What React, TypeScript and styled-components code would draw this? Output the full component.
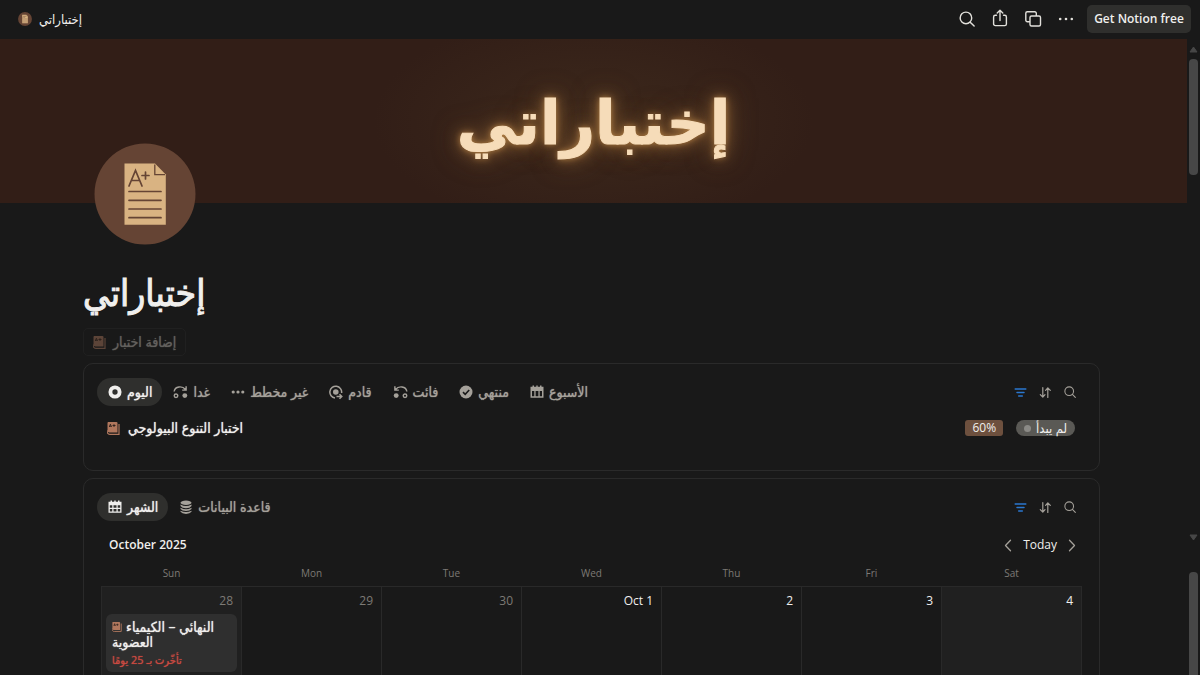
import React from "react";
import styled, { createGlobalStyle } from "styled-components";

const sans = `"Open Sans", "DejaVu Sans Condensed", "DejaVu Sans", sans-serif`;

const Global = createGlobalStyle`
  * { box-sizing: border-box; }
  html, body, #root { height: 100%; }
  body {
    margin: 0;
    overflow: hidden;
    background: #191919;
    color: #f0efed;
    font-family: ${sans};
    font-size: 12px;
    line-height: 16px;
  }
  button { font: inherit; color: inherit; border: 0; background: none; padding: 0; cursor: pointer; }
  a { color: inherit; text-decoration: none; }
  h1, h2, p { margin: 0; padding: 0; }
  svg { display: block; flex: none; }
`;

const Shell = styled.div`
  display: flex;
  flex-direction: column;
  height: 100vh;
`;

const TopBar = styled.header`
  display: flex;
  align-items: center;
  justify-content: space-between;
  flex: none;
  height: 39px;
  padding: 0 9px 1px 18px;
`;

const Crumb = styled.a`
  display: flex;
  align-items: center;
  gap: 7px;
  font-size: 13px;
`;

const Actions = styled.div`
  display: flex;
  align-items: center;
  gap: 11px;
`;

const IconGroup = styled.div`
  display: flex;
  gap: 13px;
`;

const IconButton = styled.button`
  display: flex;
  align-items: center;
  justify-content: center;
  width: 20px;
  height: 20px;
  color: #e2e0db;
`;

const CtaButton = styled.button`
  height: 28px;
  width: 104px;
  border-radius: 5px;
  background: #2f2f2d;
  font-weight: 600;
  white-space: nowrap;
`;

const Body = styled.div`
  display: flex;
  flex: 1;
  min-height: 0;
`;

const Page = styled.main`
  flex: 1;
  min-width: 0;
  overflow: hidden;
`;

const Cover = styled.div`
  display: flex;
  align-items: center;
  justify-content: center;
  height: 164px;
  padding-top: 4px;
  background: radial-gradient(ellipse 220px 110px at center, #3d291c, #321e17);
`;

const CoverText = styled.span`
  color: #f6dcb9;
  font-family: "DejaVu Sans", sans-serif;
  font-size: 60px;
  font-weight: 700;
  line-height: 80px;
  -webkit-text-stroke: 1px #f6dcb9;
  text-shadow: 0 0 6px #b88446, 0 0 16px #94683a, 0 0 28px #6b4828;
`;

const Sheet = styled.div`
  display: flex;
  flex-direction: column;
  align-items: flex-start;
  padding: 0 87px 0 83px;
`;

const PageIcon = styled.div`
  position: relative;
  margin: -60px 0 0 11px;
`;

const Title = styled.h1`
  margin-top: 23px;
  font-size: 37px;
  line-height: 48px;
  font-weight: 400;
  -webkit-text-stroke: 1px currentColor;
`;

const Medium = styled.bdi`
  font-size: 14px;
  font-weight: 400;
  text-shadow: 0 0 1px currentColor;
`;

const AddButton = styled.button`
  display: flex;
  align-items: center;
  gap: 7px;
  height: 28px;
  margin-top: 12px;
  padding: 0 9px;
  border: 1px solid #202020;
  border-radius: 5px;
  color: #62605d;
`;

const Card = styled.section<{ $height: number }>`
  align-self: stretch;
  min-height: ${(p) => p.$height}px;
  margin-top: 7px;
  padding: 14px 17px 0 13px;
  border: 1px solid #2a2a2a;
  border-radius: 10px;
`;

const CardBar = styled.div`
  display: flex;
  align-items: center;
  justify-content: space-between;
`;

const Tabs = styled.nav`
  display: flex;
`;

const Tab = styled.button<{ $active?: boolean }>`
  display: flex;
  align-items: center;
  gap: 5px;
  height: 28px;
  padding: 0 10px 0 11px;
  border-radius: 14px;
  background: ${(p) => (p.$active ? "#2f2f2d" : "transparent")};
  color: ${(p) => (p.$active ? "#f0efed" : "#a5a19a")};
  white-space: nowrap;
`;

const Tools = styled.div`
  display: flex;
  gap: 5px;
  padding-right: 2px;
`;

const ToolButton = styled(IconButton)<{ $on?: boolean }>`
  color: ${(p) => (p.$on ? "#2a77cf" : "#a5a19a")};
`;

const Row = styled.div`
  display: flex;
  align-items: center;
  justify-content: space-between;
  height: 28px;
  margin-top: 8px;
  padding: 0 7px 0 10px;
`;

const RowTitle = styled.a`
  display: flex;
  align-items: center;
  gap: 8px;
`;

const Badges = styled.div`
  display: flex;
  gap: 13px;
`;

const Percent = styled.span`
  height: 16px;
  padding: 0 7px;
  border-radius: 3px;
  background: #6d503e;
`;

const Status = styled.span`
  display: flex;
  align-items: center;
  gap: 5px;
  height: 16px;
  padding: 0 8px;
  border-radius: 8px;
  background: #5a5955;
  font-size: 13px;
`;

const Dot = styled.i`
  width: 7px;
  height: 7px;
  border-radius: 50%;
  background: #8b8a86;
`;

const MonthBar = styled.div`
  display: flex;
  align-items: center;
  justify-content: space-between;
  height: 24px;
  margin-top: 12px;
  padding-left: 12px;
`;

const Month = styled.h2`
  font-size: 12px;
  line-height: 16px;
  font-weight: 600;
`;

const Pager = styled.div`
  display: flex;
  align-items: center;
  gap: 5px;
  font-weight: 500;
`;

const Calendar = styled.table`
  width: calc(100% - 4px);
  margin: 6px 0 0 4px;
  border-collapse: collapse;
  table-layout: fixed;
`;

const DayName = styled.th`
  height: 23px;
  padding: 0;
  vertical-align: top;
  color: #7d7a75;
  font-size: 10px;
  line-height: 20px;
  font-weight: 400;
`;

const Day = styled.td<{ $weekend: boolean; $muted: boolean }>`
  height: 150px;
  padding: 6px 4px 0;
  border: 1px solid #292929;
  background: ${(p) => (p.$weekend ? "#202020" : "transparent")};
  color: ${(p) => (p.$muted ? "#7d7a75" : "#f0efed")};
  vertical-align: top;
`;

const DayNumber = styled.div`
  padding-right: 4px;
  text-align: right;
`;

const EventCard = styled.article`
  margin-top: 5px;
  padding: 5px 6px 4px;
  border-radius: 6px;
  background: #2f2f2f;
`;

const EventTitle = styled.p`
  color: #f0efed;
  font-size: 14px;
  line-height: 15px;
`;

const EventIcon = styled.span`
  display: inline-block;
  margin-right: 4px;
`;

const EventNote = styled.p`
  margin-top: 3px;
  color: #ca4a41;
  font-size: 11px;
  line-height: 16px;
  text-shadow: 0 0 1px currentColor;
`;

const Rail = styled.aside`
  display: flex;
  flex-direction: column;
  align-items: center;
  width: 13px;
  flex: none;
  padding-top: 7px;
  overflow: hidden;
`;

const Thumb = styled.div<{ $height: number }>`
  flex: none;
  width: 9px;
  height: ${(p) => p.$height}px;
  margin-top: 6px;
  border-radius: 4px;
  background: #474747;
`;

const RailEnd = styled.div`
  display: flex;
  flex-direction: column;
  align-items: center;
  gap: 25px;
  margin-top: 359px;
`;

const Search = ({ size = 18 }: { size?: number }) => (
  <svg width={size} height={size} viewBox="0 0 18 18" fill="none" stroke="currentColor" strokeWidth="1.6" strokeLinecap="round">
    <circle cx="7.8" cy="7.8" r="6.500" />
    <path d="M12.6 12.6 17 17" />
  </svg>
);

const Share = () => (
  <svg width="18" height="20" viewBox="0 0 18 20" fill="none" stroke="currentColor" strokeWidth="1.4" strokeLinecap="round" strokeLinejoin="round">
    <path d="M9 11.500V1.500M6.200 4 9 1.300 11.800 4M5.500 6.200H4.300a1.700 1.700 0 0 0-1.700 1.700v7a1.700 1.700 0 0 0 1.700 1.700h9.400a1.700 1.700 0 0 0 1.700-1.700v-7a1.700 1.700 0 0 0-1.700-1.700h-1.200" />
  </svg>
);

const Duplicate = () => (
  <svg width="18" height="18" viewBox="0 0 18 18" fill="none" stroke="currentColor" strokeWidth="1.400" strokeLinejoin="round">
    <rect x="6" y="6" width="10.500" height="10" rx="1.500" />
    <path d="M6 11.800H3.300a1.500 1.500 0 0 1-1.500-1.500V3.300a1.500 1.500 0 0 1 1.500-1.500h7.500a1.500 1.500 0 0 1 1.500 1.500V6" />
  </svg>
);

const More = () => (
  <svg width="16" height="16" viewBox="0 0 16 16" fill="currentColor">
    <circle cx="2.200" cy="8" r="1.300" /><circle cx="8" cy="8" r="1.300" /><circle cx="13.800" cy="8" r="1.300" />
  </svg>
);

const Dots = () => (
  <svg width="14" height="14" viewBox="0 0 14 14" fill="currentColor">
    <circle cx="2.200" cy="7" r="1.600" /><circle cx="7" cy="7" r="1.600" /><circle cx="11.800" cy="7" r="1.600" />
  </svg>
);

const Filter = () => (
  <svg width="13" height="13" viewBox="0 0 13 13" stroke="currentColor" strokeWidth="1.500" strokeLinecap="round">
    <path d="M1.200 3H11.800M3 6.500H10M4.700 10H8.300" />
  </svg>
);

const Sort = () => (
  <svg width="13" height="13" viewBox="0 0 13 13" fill="none" stroke="currentColor" strokeWidth="1.200" strokeLinecap="round" strokeLinejoin="round">
    <path d="M3.800 1.500V11M1.300 8.700 3.800 11.200 6 8.700M8.800 11.500V2M6.600 4.300 8.800 1.800 11.300 4.300" />
  </svg>
);

const Chevron = ({ flip }: { flip?: boolean }) => (
  <svg width="8" height="13" viewBox="0 0 8 13" fill="none" stroke="#a5a19a" strokeWidth="1.300" strokeLinecap="round" strokeLinejoin="round">
    <path d={flip ? "M1.500 1.300 6.500 6.500 1.500 11.700" : "M6.500 1.300 1.500 6.500 6.500 11.700"} />
  </svg>
);

const Paper = ({ size }: { size: number }) => (
  <svg width={size} height={size} viewBox="0 0 102 102" fill="none">
    <circle cx="51" cy="51" r="50.500" fill="#654434" />
    <path d="M30.500 20.500H61L71.800 31.500V81.800H30.500Z" fill="#d9b382" />
    <path d="M60.800 21.500V31.600H71" stroke="#654434" strokeWidth="1.300" />
    <path d="M35 43 41.500 27.500 48 43M37.500 37.500H45.500M48 32.500H55M51.500 29V36M35 48.500H67M35 57.300H67M35 66H67M35 74.700H67" stroke="#654434" strokeWidth="1.700" strokeLinecap="round" />
  </svg>
);

const Exam = ({ color = "#b0775d", size = 13 }: { color?: string; size?: number }) => (
  <svg width={size} height={size} viewBox="0 0 13 13" fill="none">
    <path d="M2 0H9.500a1 1 0 0 1 1 1V10.500H2.500A2 2 0 0 1 .5 8.500V1.200A1.200 1.200 0 0 1 2 0Z" fill={color} />
    <path d="M.6 8.500A2.500 2.500 0 0 0 3 12.300H12V2" stroke={color} strokeWidth="1.200" />
    <path d="M2.300 5 3.400 2.200 4.500 5M2.700 4.200H4.200M5.500 3.500H8.500M7 2.200V5" stroke="#2b201b" strokeWidth=".9" />
  </svg>
);

const Ring = () => (
  <svg width="14" height="14" viewBox="0 0 14 14" fill="none">
    <circle cx="7" cy="7" r="4.600" stroke="currentColor" strokeWidth="3.900" />
  </svg>
);

const StepOver = ({ back }: { back?: boolean }) => (
  <svg width="15" height="14" viewBox="0 0 16 14" fill="none" stroke="currentColor" strokeWidth="1.500">
    <g transform={back ? "translate(16 0) scale(-1 1)" : undefined}>
      <path d="M1.200 6.500C2 .5 10 .2 13.300 4.300M14 .8V5H9.800" />
      <circle cx="3.200" cy="11" r="1.900" />
      <circle cx="12.600" cy="10.800" r="2.600" fill="currentColor" stroke="none" />
    </g>
  </svg>
);

const Upcoming = () => (
  <svg width="14" height="15" viewBox="0 0 14 15" fill="none" stroke="currentColor" strokeWidth="1.500">
    <path d="M6 13A5.900 5.900 0 1 1 12.600 8" />
    <circle cx="6.800" cy="7" r="2.800" fill="currentColor" stroke="none" />
    <path d="M7.500 11.500H12.500M10.500 9.200 12.800 11.500 10.500 13.800" />
  </svg>
);

const Done = () => (
  <svg width="14" height="14" viewBox="0 0 14 14" fill="none">
    <circle cx="7" cy="7" r="6.500" fill="currentColor" />
    <path d="M4 7.200 6.200 9.300 10.200 5" stroke="#191919" strokeWidth="1.600" />
  </svg>
);

const Week = () => (
  <svg width="14" height="14" viewBox="0 0 14 14" fill="currentColor">
    <path fillRule="evenodd" d="M.5 1.800H2.500V.5H4V1.800H6.300V.5H7.700V1.800H10V.5H11.500V1.800H13.500V12.700H.5ZM2 6V11.300H4.300V6ZM5.600 6V11.300H8.400V6ZM9.700 6V11.300H12V6Z" />
  </svg>
);

const MonthIcon = () => (
  <svg width="14" height="14" viewBox="0 0 14 14" fill="currentColor">
    <path fillRule="evenodd" d="M.5 1.800H2.500V.5H4V1.800H6.300V.5H7.700V1.800H10V.5H11.500V1.800H13.500V12.700H.5ZM1.800 5.300V7.800H4.300V5.300ZM5.500 5.300V7.800H8.500V5.300ZM9.700 5.300V7.800H12.200V5.300ZM1.800 9V11.400H4.300V9ZM5.500 9V11.400H8.500V9ZM9.700 9V11.400H12.200V9Z" />
  </svg>
);

const Database = () => (
  <svg width="14" height="14" viewBox="0 0 14 14" fill="currentColor">
    <ellipse cx="7" cy="2.700" rx="5.500" ry="2.200" />
    <path d="M1.500 4.400Q7 7.500 12.500 4.400V6Q11 8.200 7 8.200T1.500 6ZM1.500 7.800Q7 10.800 12.500 7.800V9Q11 11.100 7 11.100T1.500 9ZM1.500 10.700Q7 13.500 12.500 10.700V11.800Q11 13.900 7 13.900T1.500 11.800Z" />
  </svg>
);

const Arrow = ({ down }: { down?: boolean }) => (
  <svg width="9" height="7" viewBox="0 0 9 7" fill="#474747" stroke="#474747" strokeLinejoin="round">
    <path d={down ? "M1 1H8L4.500 6Z" : "M1 6H8L4.500 1Z"} />
  </svg>
);

const examTabs = [
  { label: "اليوم", icon: <Ring /> },
  { label: "غدا", icon: <StepOver /> },
  { label: "غير مخطط", icon: <Dots /> },
  { label: "قادم", icon: <Upcoming /> },
  { label: "فائت", icon: <StepOver back /> },
  { label: "منتهي", icon: <Done /> },
  { label: "الأسبوع", icon: <Week /> },
];

const days = [
  { name: "Sun", date: "28" },
  { name: "Mon", date: "29" },
  { name: "Tue", date: "30" },
  { name: "Wed", date: "Oct 1" },
  { name: "Thu", date: "2" },
  { name: "Fri", date: "3" },
  { name: "Sat", date: "4" },
];

const ViewTools = () => (
  <Tools>
    <ToolButton $on aria-label="Filter"><Filter /></ToolButton>
    <ToolButton aria-label="Sort"><Sort /></ToolButton>
    <ToolButton aria-label="Search"><Search size={12} /></ToolButton>
  </Tools>
);

export default function App() {
  return (
    <Shell>
      <Global />
      <TopBar>
        <Crumb href="#"><Paper size={14} /><bdi>إختباراتي</bdi></Crumb>
        <Actions>
          <IconGroup>
            <IconButton aria-label="Search"><Search size={16} /></IconButton>
            <IconButton aria-label="Share"><Share /></IconButton>
            <IconButton aria-label="Duplicate"><Duplicate /></IconButton>
            <IconButton aria-label="More"><More /></IconButton>
          </IconGroup>
          <CtaButton>Get Notion free</CtaButton>
        </Actions>
      </TopBar>
      <Body>
        <Page>
          <Cover><CoverText>إختباراتي</CoverText></Cover>
          <Sheet>
            <PageIcon><Paper size={102} /></PageIcon>
            <Title>إختباراتي</Title>
            <AddButton><Exam color="#5c4438" /><Medium>إضافة اختبار</Medium></AddButton>
            <Card $height={108}>
              <CardBar>
                <Tabs>
                  {examTabs.map((t, i) => (
                    <Tab key={t.label} $active={i === 0}>{t.icon}<Medium>{t.label}</Medium></Tab>
                  ))}
                </Tabs>
                <ViewTools />
              </CardBar>
              <Row>
                <RowTitle href="#"><Exam /><Medium>اختبار التنوع البيولوجي</Medium></RowTitle>
                <Badges>
                  <Percent>60%</Percent>
                  <Status><Dot /><bdi>لم يبدأ</bdi></Status>
                </Badges>
              </Row>
            </Card>
            <Card $height={240}>
              <CardBar>
                <Tabs>
                  <Tab $active><MonthIcon /><Medium>الشهر</Medium></Tab>
                  <Tab><Database /><Medium>قاعدة البيانات</Medium></Tab>
                </Tabs>
                <ViewTools />
              </CardBar>
              <MonthBar>
                <Month>October 2025</Month>
                <Pager>
                  <IconButton aria-label="Previous month"><Chevron /></IconButton>
                  <button>Today</button>
                  <IconButton aria-label="Next month"><Chevron flip /></IconButton>
                </Pager>
              </MonthBar>
              <Calendar>
                <thead>
                  <tr>{days.map((d) => <DayName key={d.name} scope="col">{d.name}</DayName>)}</tr>
                </thead>
                <tbody>
                  <tr>
                    {days.map((d, i) => (
                      <Day key={d.name} $weekend={i === 0 || i === 6} $muted={i < 3}>
                        <DayNumber>{d.date}</DayNumber>
                        {i === 0 && (
                          <EventCard>
                            <EventTitle>
                              <EventIcon><Exam size={10} /></EventIcon>
                              <Medium>النهائي – الكيمياء العضوية</Medium>
                            </EventTitle>
                            <EventNote><bdi>تأخّرت بـ 25 يومًا</bdi></EventNote>
                          </EventCard>
                        )}
                      </Day>
                    ))}
                  </tr>
                </tbody>
              </Calendar>
            </Card>
          </Sheet>
        </Page>
        <Rail aria-hidden="true">
          <Arrow />
          <Thumb $height={116} />
          <RailEnd>
            <Arrow down />
            <Thumb $height={120} />
          </RailEnd>
        </Rail>
      </Body>
    </Shell>
  );
}
